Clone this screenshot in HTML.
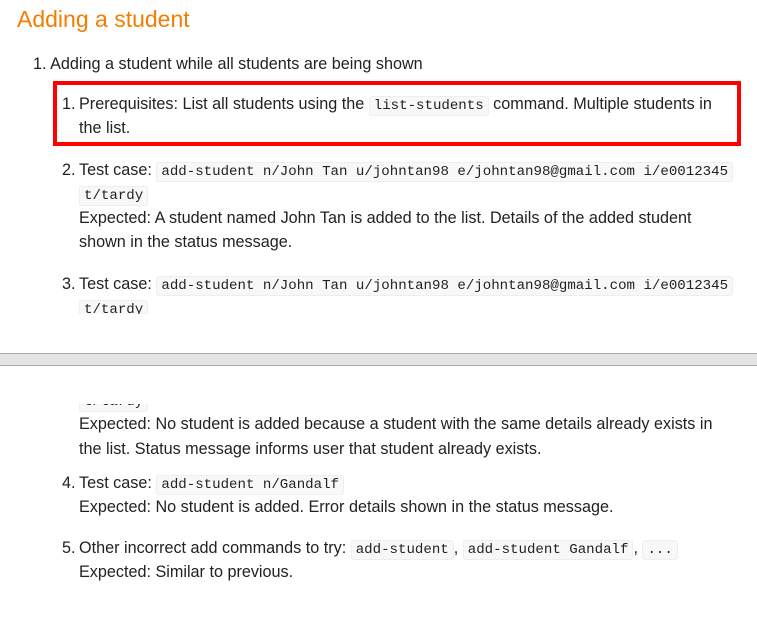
<!DOCTYPE html><html><head><meta charset="utf-8"><style>
body{margin:0;width:757px;height:617px;background:#fff;position:relative;overflow:hidden;font-family:"Liberation Sans",sans-serif;color:#222;font-size:16.2px}
.l{position:absolute;white-space:nowrap;line-height:24px}
code{font-family:"Liberation Mono",monospace;font-size:14.1px;background:#f8f8f8;border:1px solid #eee;border-radius:3px;padding:1px 4px;color:#222}
.n{position:absolute;left:-17px}
</style></head><body>
<div class="l" style="left:17px;top:5px;font-size:23px;line-height:28px;color:#f57c00">Adding a student</div>
<div class="l" style="left:33px;top:52px">1. Adding a student while all students are being shown</div>
<div style="position:absolute;left:53px;top:81px;width:680px;height:57px;border:4px solid #f00"></div>
<div class="l" style="left:79px;top:92px"><span class="n">1.</span>Prerequisites: List all students using the <code>list-students</code> command. Multiple students in</div>
<div class="l" style="left:79px;top:116px">the list.</div>
<div class="l" style="left:79px;top:158px"><span class="n">2.</span>Test case: <code>add-student n/John Tan u/johntan98 e/johntan98@gmail.com i/e0012345</code></div>
<div class="l" style="left:79px;top:182px"><code>t/tardy</code></div>
<div class="l" style="left:79px;top:206px">Expected: A student named John Tan is added to the list. Details of the added student</div>
<div class="l" style="left:79px;top:230px">shown in the status message.</div>
<div class="l" style="left:79px;top:272px"><span class="n">3.</span>Test case: <code>add-student n/John Tan u/johntan98 e/johntan98@gmail.com i/e0012345</code></div>
<div style="position:absolute;left:0;top:296px;width:757px;height:18px;overflow:hidden"><div class="l" style="left:79px;top:0px"><code>t/tardy</code></div></div>
<div style="position:absolute;left:0;top:353px;width:757px;height:11px;background:#e4e4e4;border-top:1px solid #aaa;border-bottom:1px solid #aaa"></div>
<div style="position:absolute;left:0;top:404px;width:757px;height:8px;overflow:hidden"><div class="l" style="left:79px;top:-16px"><code>t/tardy</code></div></div>
<div class="l" style="left:79px;top:412px">Expected: No student is added because a student with the same details already exists in</div>
<div class="l" style="left:79px;top:437px">the list. Status message informs user that student already exists.</div>
<div class="l" style="left:79px;top:471px"><span class="n">4.</span>Test case: <code>add-student n/Gandalf</code></div>
<div class="l" style="left:79px;top:495px">Expected: No student is added. Error details shown in the status message.</div>
<div class="l" style="left:79px;top:536px"><span class="n">5.</span>Other incorrect add commands to try: <code>add-student</code>, <code>add-student Gandalf</code>, <code>...</code></div>
<div class="l" style="left:79px;top:560px">Expected: Similar to previous.</div>
</body></html>
